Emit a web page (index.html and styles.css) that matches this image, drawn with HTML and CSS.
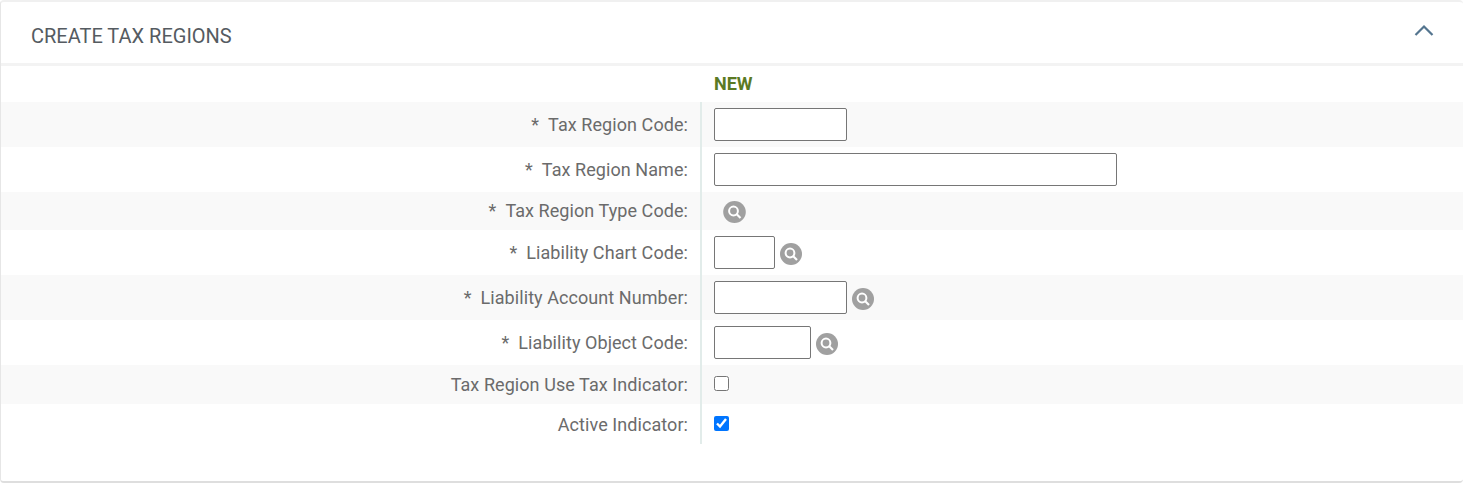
FILE: index.html
```html
<!DOCTYPE html>
<html lang="en">
<head>
<meta charset="utf-8">
<title>Create Tax Regions</title>
<link rel="stylesheet" href="styles.css">
</head>
<body>
<section class="card">
  <header class="card-head">
    <h2 class="card-title">CREATE TAX REGIONS</h2>
    <svg class="chevron" width="20" height="12" viewBox="0 0 20 12"><path d="M1.5 11 L10 2.5 L18.5 11" fill="none" stroke="#54758f" stroke-width="2.2"/></svg>
  </header>
  <div class="new-row"><span class="new-label">NEW</span></div>
  <div class="form">
    <div class="row h45 alt">
      <div class="label"><span class="req">*</span>Tax Region Code:</div>
      <div class="field"><input class="input w133" type="text"></div>
    </div>
    <div class="row h45">
      <div class="label"><span class="req">*</span>Tax Region Name:</div>
      <div class="field"><input class="input w403" type="text"></div>
    </div>
    <div class="row h38 alt">
      <div class="label raised"><span class="req">*</span>Tax Region Type Code:</div>
      <div class="field"><span class="search solo"><svg width="23" height="22" viewBox="0 0 23 22"><ellipse cx="11.5" cy="11" rx="11.3" ry="11" fill="#a0a0a0"/><circle cx="10.5" cy="10" r="4.4" fill="none" stroke="#fff" stroke-width="2"/><path d="M13.5 13 L17.5 17" stroke="#fff" stroke-width="2.2"/></svg></span></div>
    </div>
    <div class="row h45">
      <div class="label"><span class="req">*</span>Liability Chart Code:</div>
      <div class="field"><input class="input w61" type="text"><span class="search"><svg width="22" height="22" viewBox="0 0 22 22"><circle cx="11" cy="11" r="11" fill="#a0a0a0"/><circle cx="10" cy="10" r="4.4" fill="none" stroke="#fff" stroke-width="2"/><path d="M13 13 L17 17" stroke="#fff" stroke-width="2.2"/></svg></span></div>
    </div>
    <div class="row h45 alt">
      <div class="label"><span class="req">*</span>Liability Account Number:</div>
      <div class="field"><input class="input w133" type="text"><span class="search"><svg width="22" height="22" viewBox="0 0 22 22"><circle cx="11" cy="11" r="11" fill="#a0a0a0"/><circle cx="10" cy="10" r="4.4" fill="none" stroke="#fff" stroke-width="2"/><path d="M13 13 L17 17" stroke="#fff" stroke-width="2.2"/></svg></span></div>
    </div>
    <div class="row h45">
      <div class="label"><span class="req">*</span>Liability Object Code:</div>
      <div class="field"><input class="input w97" type="text"><span class="search"><svg width="22" height="22" viewBox="0 0 22 22"><circle cx="11" cy="11" r="11" fill="#a0a0a0"/><circle cx="10" cy="10" r="4.4" fill="none" stroke="#fff" stroke-width="2"/><path d="M13 13 L17 17" stroke="#fff" stroke-width="2.2"/></svg></span></div>
    </div>
    <div class="row h39 alt">
      <div class="label">Tax Region Use Tax Indicator:</div>
      <div class="field"><input class="check" type="checkbox"></div>
    </div>
    <div class="row h40">
      <div class="label">Active Indicator:</div>
      <div class="field"><input class="check" type="checkbox" checked></div>
    </div>
  </div>
</section>
</body>
</html>
```
FILE: styles.css
```css
* { box-sizing: border-box; }
html, body { margin: 0; padding: 0; background: #fff; }
body { font-family: Roboto, "Liberation Sans", sans-serif; height: 483px; overflow: hidden; }
.card {
  height: 483px;
  border-radius: 4px;
  background: #fff;
  border-top: 2px solid #f0f0f0;
  border-left: 1px solid #e6e6e6;
  border-bottom: 2px solid #dedede;
}
.card-head {
  height: 64px;
  border-bottom: 3px solid #f3f3f3;
  display: flex;
  justify-content: space-between;
  padding: 0 29px 0 30px;
}
.card-title {
  margin: 0;
  font-weight: 400;
  font-size: 20px;
  line-height: 68px;
  color: #555b61;
}
.chevron { margin-top: 22px; }
.new-row { height: 36px; display: flex; padding: 0 0 2px 713px; align-items: center; }
.new-label { font-size: 18px; font-weight: 700; color: #5b7a23; }
.row { display: flex; }
.h45 { height: 45px; }
.h38 { height: 38px; }
.h39 { height: 39px; }
.h40 { height: 40px; }
.alt { background: #f9f9f9; }
.label {
  width: 701px;
  padding: 0 12px 0 0;
  border-right: 2px solid #e2ecea;
  display: flex;
  justify-content: flex-end;
  align-items: center;
  font-size: 18px;
  letter-spacing: 0.07px;
  color: #6b6b6b;
}
.raised { padding-bottom: 2px; }
.req { margin-right: 9px; }
.field { display: flex; align-items: center; padding-left: 12px; }
.input {
  height: 33px;
  border: 1px solid #767676;
  border-radius: 2px;
  background: #fff;
  padding: 1px 2px;
  margin: 0;
}
.w133 { width: 133px; }
.w403 { width: 403px; }
.w61 { width: 61px; }
.w97 { width: 97px; }
.search { display: flex; margin-left: 5px; margin-top: 3px; }
.solo { margin-left: 9px; margin-top: 2px; }
.check { width: 15px; height: 15px; margin: 0 0 2px 0; accent-color: #0075ff; }
```
